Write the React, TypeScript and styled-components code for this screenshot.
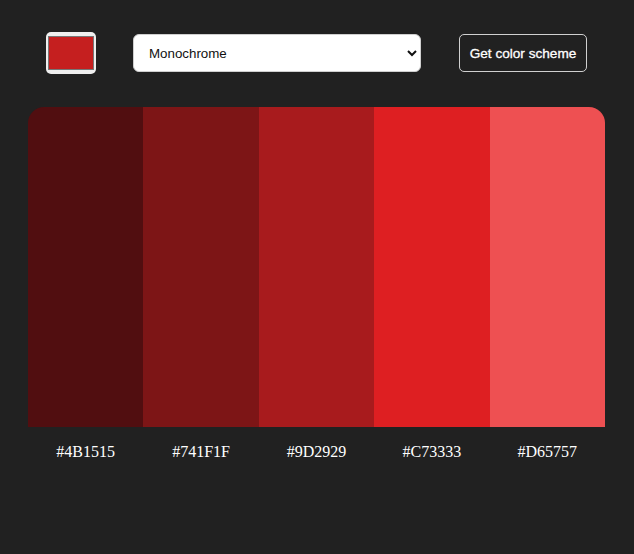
import React, { FunctionComponent, useState } from 'react';
import styled, { createGlobalStyle } from 'styled-components';

const GlobalStyle = createGlobalStyle`
  body {
    margin: 0;
    background-color: #212121;
    font-family: "Liberation Serif", "Times New Roman", serif;
  }
`;

const Page = styled.main`
  width: 577px;
  margin: 0 29px 0 28px;
  padding-top: 32px;
`;

const Controls = styled.form`
  display: flex;
  align-items: center;
  padding-left: 18px;
`;

const ColorPicker = styled.input`
  width: 50px;
  height: 42px;
  margin: 0 37px 0 0;
  padding: 4px 2px;
  border: none;
  border-radius: 5px;
  background-color: #efefef;
  cursor: pointer;

  &::-webkit-color-swatch-wrapper {
    padding: 0;
  }

  &::-webkit-color-swatch {
    border: 1px solid #777;
    border-radius: 0;
  }
`;

const SchemeSelect = styled.select`
  width: 288px;
  height: 38px;
  margin: 0 38px 0 0;
  padding: 0 11px;
  border: 1px solid #cfcfcf;
  border-radius: 6px;
  background-color: white;
  color: #111;
  font-family: "Liberation Sans", Arial, sans-serif;
  font-size: 13.33px;
`;

const SubmitButton = styled.button`
  width: 128px;
  height: 38px;
  padding: 0;
  border: 1px solid #d0d0d0;
  border-radius: 5px;
  background: transparent;
  color: white;
  font-family: "Liberation Sans", Arial, sans-serif;
  font-size: 13.6px;
  font-weight: normal;
  -webkit-text-stroke: 0.3px white;
  cursor: pointer;
`;

const Palette = styled.section`
  margin-top: 33px;
  display: grid;
  grid-template-columns: repeat(5, 1fr);
  height: 320px;
  border-radius: 16px 16px 0 0;
  overflow: hidden;
`;

const Swatch = styled.div<{ $color: string }>`
  background-color: ${(p) => p.$color};
`;

const Labels = styled.div`
  margin-top: 16px;
  display: grid;
  grid-template-columns: repeat(5, 1fr);
`;

const HexLabel = styled.p`
  margin: 0;
  text-align: center;
  color: white;
  font-size: 16px;
  line-height: 18px;
`;

const SCHEMES = ['Monochrome', 'Monochrome Dark', 'Monochrome Light', 'Analogic', 'Complement', 'Triad', 'Quad'];

const COLORS = [
  { hex: '#4B1515', shown: '#510E10' },
  { hex: '#741F1F', shown: '#7D1516' },
  { hex: '#9D2929', shown: '#A81B1D' },
  { hex: '#C73333', shown: '#DE1F22' },
  { hex: '#D65757', shown: '#EE5052' },
];

const App: FunctionComponent = () => {
  const [seed, setSeed] = useState('#c51f1f');
  const [mode, setMode] = useState(SCHEMES[0]);

  return (
    <>
      <GlobalStyle />
      <Page>
        <Controls onSubmit={(e) => e.preventDefault()}>
          <ColorPicker type="color" value={seed} onChange={(e) => setSeed(e.target.value)} />
          <SchemeSelect value={mode} onChange={(e) => setMode(e.target.value)}>
            {SCHEMES.map((s) => (
              <option key={s}>{s}</option>
            ))}
          </SchemeSelect>
          <SubmitButton type="submit">Get color scheme</SubmitButton>
        </Controls>
        <Palette>
          {COLORS.map((c) => (
            <Swatch key={c.hex} $color={c.shown} />
          ))}
        </Palette>
        <Labels>
          {COLORS.map((c) => (
            <HexLabel key={c.hex}>{c.hex}</HexLabel>
          ))}
        </Labels>
      </Page>
    </>
  );
};

export default App;
